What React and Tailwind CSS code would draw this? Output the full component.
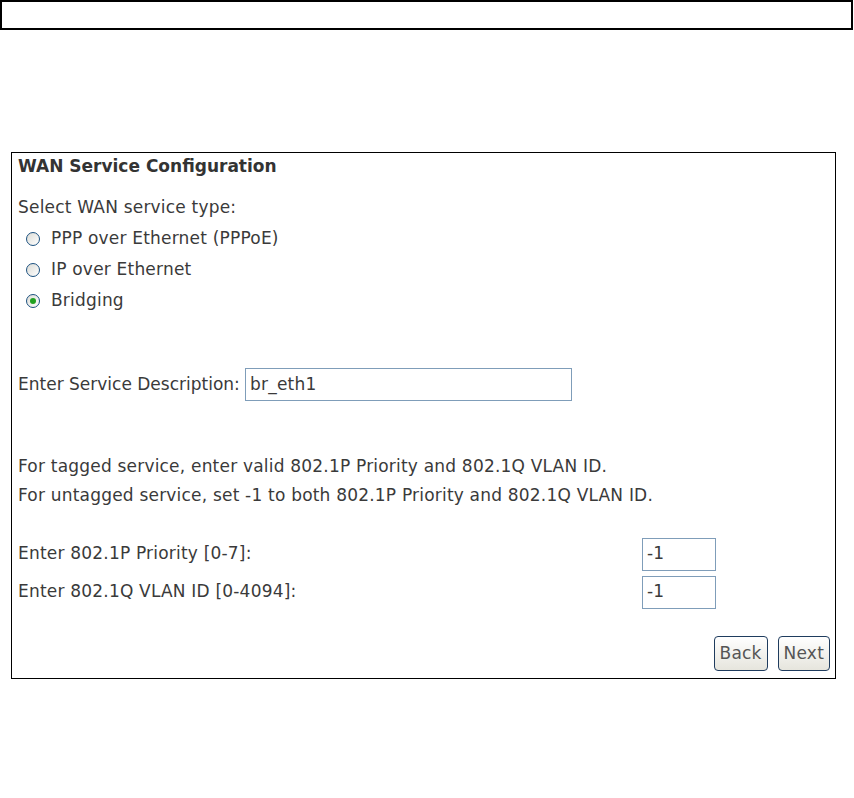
import React from "react";

const Radio = ({ checked }) => (
  <span className="ml-[8px] mr-[11px] flex h-[14px] w-[14px] items-center justify-center rounded-full border border-[#1c5180] bg-gradient-to-br from-[#dcdcd6] to-white">
    {checked && <span className="h-[6px] w-[6px] rounded-full bg-[#21a121]" />}
  </span>
);

const Field = ({ value, className }) => (
  <div className={"flex items-center border border-[#7f9db9] bg-white pl-[4px] " + className}>
    {value}
  </div>
);

const Button = ({ children }) => (
  <div className="flex h-[35px] items-center rounded-[4px] border border-[#1f3c5e] bg-gradient-to-b from-white to-[#e6e5dd] px-[5px] text-[#555]">
    {children}
  </div>
);

export default function App() {
  return (
    <div className="min-h-[798px] bg-white font-['DejaVu_Sans',sans-serif] text-[17px] tracking-[0.2px] text-[#3a3a3a]">
      <div className="h-[30px] w-[853px] border-2 border-black" />

      <div className="ml-[11px] mt-[122px] h-[527px] w-[825px] border border-black pl-[6px] pr-[5px]">
        <div className="flex h-[28px] items-center font-bold tracking-normal text-[#333]">
          WAN Service Configuration
        </div>
        <div className="mt-[11px] flex h-[31px] items-center">Select WAN service type:</div>
        <div className="flex h-[31px] items-center">
          <Radio />
          PPP over Ethernet (PPPoE)
        </div>
        <div className="flex h-[31px] items-center">
          <Radio />
          IP over Ethernet
        </div>
        <div className="flex h-[31px] items-center">
          <Radio checked />
          Bridging
        </div>

        <div className="mt-[52px] flex h-[33px] items-center">
          <span className="w-[227px] whitespace-nowrap tracking-normal">Enter Service Description:</span>
          <Field value="br_eth1" className="h-[33px] w-[327px]" />
        </div>

        <div className="mt-[51px] leading-[29px]">
          <div>For tagged service, enter valid 802.1P Priority and 802.1Q VLAN ID.</div>
          <div>For untagged service, set -1 to both 802.1P Priority and 802.1Q VLAN ID.</div>
        </div>

        <div className="mt-[28px] flex h-[32px] items-center">
          <span className="w-[624px]">Enter 802.1P Priority [0-7]:</span>
          <Field value="-1" className="h-[33px] w-[74px]" />
        </div>
        <div className="mt-[6px] flex h-[32px] items-center">
          <span className="w-[624px]">Enter 802.1Q VLAN ID [0-4094]:</span>
          <Field value="-1" className="h-[33px] w-[74px]" />
        </div>

        <div className="mt-[28px] flex justify-end gap-[10px]">
          <Button>Back</Button>
          <Button>Next</Button>
        </div>
      </div>
    </div>
  );
}
